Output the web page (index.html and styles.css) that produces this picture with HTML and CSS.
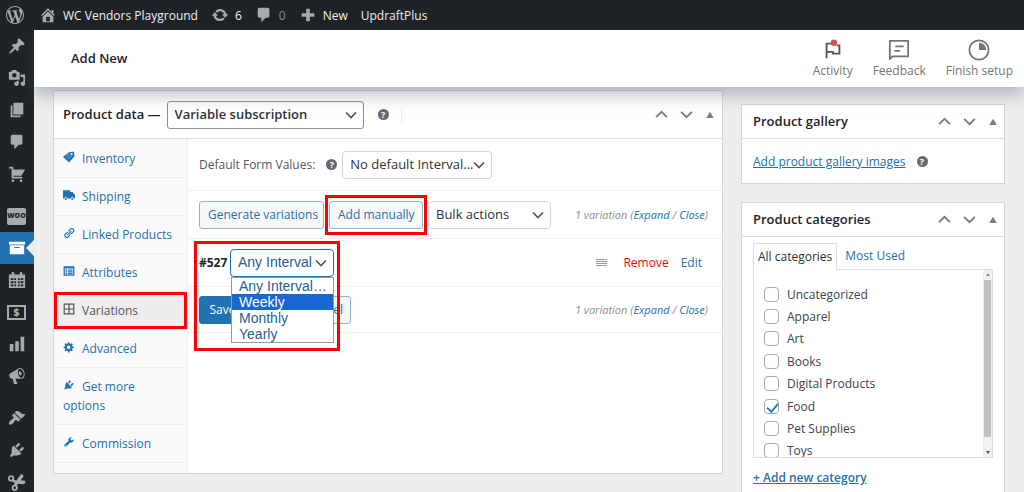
FILE: index.html
```html
<!DOCTYPE html>
<html lang="en">
<head>
<meta charset="utf-8">
<title>Add New</title>
<link rel="stylesheet" href="styles.css">
</head>
<body>
<svg class="sprite" aria-hidden="true">
  <symbol id="wp" viewBox="0 0 20 20"><path d="M20 10c0-5.51-4.49-10-10-10C4.48 0 0 4.49 0 10c0 5.52 4.48 10 10 10 5.51 0 10-4.48 10-10zM7.78 15.37L4.37 6.22c.55-.02 1.17-.08 1.17-.08.5-.06.44-1.13-.06-1.11 0 0-1.45.11-2.37.11-.18 0-.37 0-.58-.01C4.12 2.69 6.87 1.11 10 1.11c2.33 0 4.45.87 6.05 2.34-.68-.11-1.65.39-1.65 1.58 0 .74.45 1.36.9 2.1.35.61.55 1.36.55 2.46 0 1.49-1.4 5-1.4 5l-3.03-8.37c.54-.02.82-.17.82-.17.5-.05.44-1.25-.06-1.22 0 0-1.44.12-2.38.12-.87 0-2.33-.12-2.33-.12-.5-.03-.56 1.2-.06 1.22l.92.08 1.26 3.41zM17.41 10c.24-.64.74-1.87.43-4.25.7 1.29 1.05 2.71 1.05 4.25 0 3.29-1.73 6.24-4.4 7.78.97-2.59 1.94-5.2 2.92-7.78zM6.1 18.09C3.12 16.65 1.11 13.53 1.11 10c0-1.3.23-2.48.72-3.59C3.25 10.3 4.67 14.2 6.1 18.09zm4.03-6.63l2.58 6.98c-.86.29-1.76.45-2.71.45-.79 0-1.57-.11-2.29-.33.81-2.38 1.62-4.74 2.42-7.1z"/></symbol>
  <symbol id="home" viewBox="0 0 20 20"><path d="M16 8.5l1.53 1.53-1.06 1.06L10 4.6l-6.47 6.49-1.06-1.06L10 2.5l4 4v-2h2v4zm-6-2.46l6 5.99V18H4v-5.97zM12 17v-5H8v5h4z"/></symbol>
  <symbol id="update" viewBox="0 0 20 20"><path d="M10.2 3.28c3.53 0 6.43 2.61 6.92 6h2.08l-3.5 4-3.5-4h2.32c-.45-1.97-2.21-3.45-4.32-3.45-1.45 0-2.73.71-3.54 1.78L4.95 5.66C6.23 4.2 8.11 3.28 10.2 3.28zm-.4 13.44c-3.52 0-6.43-2.61-6.92-6H.8l3.5-4c1.17 1.33 2.33 2.67 3.5 4H5.48c.45 1.97 2.21 3.45 4.32 3.45 1.45 0 2.73-.71 3.54-1.78l1.71 1.95c-1.28 1.46-3.15 2.38-5.25 2.38z"/></symbol>
  <symbol id="comment" viewBox="0 0 20 20"><path d="M5 2h9c1.1 0 2 .9 2 2v7c0 1.1-.9 2-2 2h-2l-5 5v-5H5c-1.1 0-2-.9-2-2V4c0-1.1.9-2 2-2z"/></symbol>
  <symbol id="plus" viewBox="0 0 20 20"><path d="M8 3h4v5h5v4h-5v5H8v-5H3V8h5z"/></symbol>
  <symbol id="pin" viewBox="0 0 20 20"><path d="M10.44 3.02l1.82-1.82 6.36 6.35-1.83 1.82c-1.05-.68-2.48-.57-3.41.36l-.75.75c-.92.93-1.04 2.35-.35 3.41l-1.83 1.82-2.41-2.41-2.8 2.79c-.42.42-3.38 2.71-3.8 2.29s1.86-3.39 2.28-3.81l2.79-2.79L4.1 9.36l1.83-1.82c1.05.69 2.48.57 3.4-.36l.75-.75c.93-.92 1.05-2.35.36-3.41z"/></symbol>
  <symbol id="media" viewBox="0 0 20 20"><path d="M13 11V4c0-.55-.45-1-1-1h-1.67L9 1H5L3.67 3H2c-.55 0-1 .45-1 1v7c0 .55.45 1 1 1h10c.55 0 1-.45 1-1zM7 4.5c1.38 0 2.5 1.12 2.5 2.5S8.38 9.5 7 9.5 4.5 8.38 4.5 7 5.62 4.5 7 4.5zM14 6h5v10.5c0 1.38-1.12 2.5-2.5 2.5S14 17.88 14 16.5s1.12-2.5 2.5-2.5c.17 0 .34.02.5.05V9h-3V6zm-4 8.05V13h2v3.5c0 1.38-1.12 2.5-2.5 2.5S7 17.88 7 16.5 8.12 14 9.5 14c.17 0 .34.02.5.05z"/></symbol>
  <symbol id="page" viewBox="0 0 20 20"><path d="M6 15V2h11v13H6zm-1 1h9v2H3V5h2v11z"/></symbol>
  <symbol id="cart" viewBox="0 0 20 20"><path d="M6 13h9c.55 0 1 .45 1 1s-.45 1-1 1H5c-.55 0-1-.45-1-1V4H2c-.55 0-1-.45-1-1s.45-1 1-1h3c.55 0 1 .45 1 1v2h13l-4 7H6v1zm-.5 3c.83 0 1.5.67 1.5 1.5S6.33 19 5.5 19 4 18.33 4 17.5 4.67 16 5.5 16zm9 0c.83 0 1.5.67 1.5 1.5s-.67 1.5-1.5 1.5-1.5-.67-1.5-1.5.67-1.5 1.5-1.5z"/></symbol>
  <symbol id="archive" viewBox="0 0 20 20"><path d="M19 3v3H1V3h18zM2 7h16v10H2V7zm11 3V9H7v1h6z"/></symbol>
  <symbol id="calendar" viewBox="0 0 20 20"><path fill-rule="evenodd" d="M1 4h3V2.500a1.500 1.500 0 0 1 3 0V4h6V2.500a1.500 1.500 0 0 1 3 0V4h3v15H1zM3 8v2h3V8zm4 0v2h2V8zM11 8v2h2V8zm3 0v2h3V8zM3 11.500v2h3v-2zm4 0v2h2v-2zM11 11.500v2h2v-2zm3 0v2h3v-2zM3 15v2h3v-2zm4 0v2h2v-2zM11 15v2h2v-2zm3 0v2h3v-2z"/></symbol>
  <symbol id="chart" viewBox="0 0 20 20"><path d="M18 18V2h-4v16h4zm-6 0V7H8v11h4zm-6 0v-8H2v8h4z"/></symbol>
  <symbol id="megaphone" viewBox="0 0 20 20"><path d="M18.150 5.940c.46 1.620.38 3.220-.02 4.480-.42 1.280-1.260 2.180-2.300 2.480-.16.06-.26.06-.4.06-.06.02-.12.02-.18.02-.06.02-.14.02-.22.02h-6.800l2.220 5.500c.02.14-.06.26-.14.34-.08.1-.24.16-.34.16H6.950c-.1 0-.26-.06-.34-.16-.08-.08-.16-.2-.14-.34l-1-5.500H4.250l-.02-.02c-.5.06-1.080-.18-1.540-.62s-.88-1.080-1.060-1.880c-.24-.8-.2-1.560-.02-2.200.18-.62.58-1.080 1.060-1.300l.02-.02 9-5.400c.1-.06.18-.1.24-.16.06-.04.14-.08.24-.12.16-.08.28-.12.5-.18 1.040-.3 2.240.1 3.220.98s1.840 2.240 2.260 3.860zm-2.580 5.980h-.02c.4-.1.74-.34 1.040-.7.58-.7.86-1.760.86-3.040 0-.64-.1-1.300-.28-1.980-.34-1.360-1.020-2.500-1.780-3.240s-1.680-1.100-2.460-.88c-.82.22-1.400.96-1.700 2-.32 1.040-.28 2.360.06 3.720.38 1.360 1 2.500 1.800 3.240.78.74 1.620 1.100 2.480.88zm-2.540-7.080c.22-.04.42-.02.62.04.38.16.76.48 1.020 1s.42 1.200.42 1.780c0 .3-.04.56-.12.8-.18.48-.44.84-.86.94-.34.1-.8-.06-1.140-.4s-.64-.86-.78-1.500c-.18-.62-.12-1.240.02-1.720s.48-.84.82-.94z"/></symbol>
  <symbol id="brush" viewBox="0 0 20 20"><path d="M14.480 11.060L7.410 3.990l1.500-1.500c.5-.56 2.300-.47 3.510.32 1.210.8 1.430 1.280 2.910 2.100 1.180.64 2.450 1.260 4.450.85zm-.71.71L6.700 4.700 4.930 6.470c-.39.39-.39 1.020 0 1.410l1.060 1.060c.39.39.39 1.030 0 1.420-.6.6-1.430 1.110-2.210 1.690-.35.26-.7.53-1.010.84C1.430 14.230.4 16.080 1.400 17.070c.99 1 2.840-.03 4.180-1.360.31-.31.58-.66.85-1.020.57-.78 1.080-1.610 1.690-2.210.39-.39 1.020-.39 1.410 0l1.060 1.060c.39.39 1.020.39 1.410 0z"/></symbol>
  <symbol id="plug" viewBox="0 0 20 20"><path d="M13.110 4.360L9.870 7.600 8 5.730l3.240-3.240c.35-.34 1.050-.2 1.560.32.52.51.66 1.210.31 1.550zm-8 1.770l.91-1.120 9.010 9.010-1.190.84c-.71.71-2.630 1.160-3.820 1.160H6.140L4.900 17.260c-.59.59-1.540.59-2.120 0-.59-.58-.59-1.530 0-2.120l1.240-1.240v-3.880c0-1.130.4-3.190 1.090-3.890zm7.260 3.970l3.240-3.240c.34-.35 1.040-.21 1.550.31.52.51.66 1.210.31 1.550l-3.240 3.250z"/></symbol>
  <symbol id="scissors" viewBox="0 0 20 20"><path d="M5 6.500l4 2L14.500 1.500c2 0 3 1.500 2.500 3L14 8l5 .5c1 1.500 0 3.500-2 4l-6-.5-2 3-2.500-1.500 1-2.500L4 9z"/><circle cx="3.500" cy="6" r="2.500" fill="none" stroke="currentColor" stroke-width="2"/><circle cx="7.500" cy="16.500" r="2.500" fill="none" stroke="currentColor" stroke-width="2"/></symbol>
  <symbol id="tag" viewBox="0 0 20 20"><path fill-rule="evenodd" d="M10 2l7-1 1.500 1.500L19 9l-9 10L0 9.500zM14.500 3.500a1.500 1.500 0 1 0 .1 0z"/><path d="M4.500 9.500L11 3.500M6.500 11.500L13 6M8.500 13.500L15.500 7.500" fill="none" stroke="#fff" stroke-opacity=".55" stroke-width="1"/></symbol>
  <symbol id="truck" viewBox="0 0 20 20"><path d="M0 2h12v3h4l4 5v6h-2a2.500 2.500 0 0 0-5 0H7a2.500 2.500 0 0 0-5 0H0z"/><circle cx="4.500" cy="16.500" r="1.700"/><circle cx="15.500" cy="16.500" r="1.700"/></symbol>
  <symbol id="link" viewBox="0 0 20 20"><path d="M17.740 2.760c1.680 1.690 1.680 4.410 0 6.100l-1.530 1.520c-1.120 1.120-2.700 1.470-4.140 1.090l2.620-2.610.76-.77.76-.76c.84-.84.84-2.200 0-3.040-.84-.85-2.200-.85-3.040 0l-.77.76-3.380 3.380c-.37-1.440-.02-3.020 1.100-4.140l1.520-1.530c1.690-1.680 4.420-1.680 6.100 0zM8.590 13.430l5.340-5.340c.42-.42.42-1.100 0-1.520-.44-.43-1.130-.39-1.530 0l-5.330 5.340c-.42.42-.42 1.100 0 1.520.44.43 1.130.39 1.520 0zm-.76 2.290l4.140-4.150c.38 1.440.03 3.020-1.090 4.140l-1.520 1.530c-1.690 1.680-4.410 1.680-6.100 0-1.680-1.680-1.680-4.420 0-6.100l1.530-1.520c1.120-1.120 2.700-1.470 4.140-1.100l-4.140 4.150c-.85.84-.85 2.200 0 3.050.84.84 2.200.84 3.040 0z"/></symbol>
  <symbol id="list" viewBox="0 0 20 20"><path fill-rule="evenodd" d="M1 2h18v16H1zM3 6v10h14V6z"/><path d="M4 7.500h3v2H4zm4.500 0H16v2H8.500zM4 10.500h3v2H4zm4.500 0H16v2H8.500zM4 13.500h3v2H4zm4.500 0H16v2H8.500z"/></symbol>
  <symbol id="grid" viewBox="0 0 20 20"><path fill-rule="evenodd" d="M1 1h18v18H1zM3 3v6h6V3zm8 0v6h6V3zM3 11v6h6v-6zm8 0v6h6v-6z"/></symbol>
  <symbol id="gear" viewBox="0 0 20 20"><path d="M18 12h-2.180c-.17.7-.44 1.350-.81 1.930l1.540 1.540-2.100 2.100-1.540-1.540c-.58.36-1.230.63-1.910.79V19H8v-2.180c-.68-.16-1.330-.43-1.910-.79l-1.540 1.540-2.120-2.120 1.540-1.540c-.36-.58-.63-1.230-.79-1.910H1V9.030h2.170c.16-.7.44-1.350.8-1.940L2.430 5.550l2.100-2.100 1.540 1.540c.58-.37 1.240-.64 1.930-.81V2h3v2.180c.68.16 1.330.43 1.910.79l1.540-1.540 2.120 2.120-1.540 1.540c.36.59.64 1.240.8 1.940H18V12zm-8.500 1.500c1.660 0 3-1.340 3-3s-1.340-3-3-3-3 1.340-3 3 1.340 3 3 3z"/></symbol>
  <symbol id="wrench" viewBox="0 0 20 20"><path d="M16.680 9.770c-1.340 1.340-3.300 1.670-4.950.99l-5.410 6.520c-.99.99-2.590.99-3.580 0s-.99-2.590 0-3.570l6.520-5.420c-.68-1.650-.35-3.610.99-4.950 1.280-1.280 3.120-1.620 4.720-1.060l-2.890 2.890 2.820 2.820 2.860-2.870c.53 1.580.18 3.390-1.080 4.650zM3.810 16.210c.4.39 1.040.39 1.430 0 .4-.4.4-1.040 0-1.430-.39-.4-1.030-.4-1.430 0-.39.39-.39 1.030 0 1.430z"/></symbol>
  <symbol id="down" viewBox="0 0 12 12"><path d="M1 3.500l5 5 5-5" fill="none" stroke="currentColor" stroke-width="1.700"/></symbol>
  <symbol id="up" viewBox="0 0 12 12"><path d="M1 8.500l5-5 5 5" fill="none" stroke="currentColor" stroke-width="1.700"/></symbol>
  <symbol id="toggle" viewBox="0 0 12 12"><path d="M6 2l4.500 7.500h-9z"/></symbol>
</svg>

<nav class="adminbar" aria-label="Toolbar">
  <a class="adminbar-item adminbar-logo" href="#" aria-label="WordPress"><svg><use href="#wp"/></svg></a>
  <a class="adminbar-item" href="#"><svg><use href="#home"/></svg>WC Vendors Playground</a>
  <a class="adminbar-item" href="#"><svg><use href="#update"/></svg>6</a>
  <a class="adminbar-item comments" href="#"><svg><use href="#comment"/></svg>0</a>
  <a class="adminbar-item" href="#"><svg><use href="#plus"/></svg>New</a>
  <a class="adminbar-item" href="#">UpdraftPlus</a>
</nav>

<div class="shell">
  <nav class="menu" aria-label="Main menu">
    <a href="#" aria-label="Posts"><svg><use href="#pin"/></svg></a>
    <a href="#" aria-label="Media"><svg><use href="#media"/></svg></a>
    <a href="#" aria-label="Pages"><svg><use href="#page"/></svg></a>
    <a href="#" aria-label="Comments"><svg><use href="#comment"/></svg></a>
    <a href="#" aria-label="Orders"><svg><use href="#cart"/></svg></a>
    <a class="group" href="#"><span class="woo">WOO</span></a>
    <a class="current" href="#" aria-label="Products"><svg><use href="#archive"/></svg></a>
    <a href="#" aria-label="Bookings"><svg><use href="#calendar"/></svg></a>
    <a href="#"><span class="money">$</span></a>
    <a href="#" aria-label="Analytics"><svg><use href="#chart"/></svg></a>
    <a href="#" aria-label="Marketing"><svg><use href="#megaphone"/></svg></a>
    <a class="group" href="#" aria-label="Appearance"><svg><use href="#brush"/></svg></a>
    <a href="#" aria-label="Plugins"><svg><use href="#plug"/></svg></a>
    <a href="#" aria-label="Snippets"><svg><use href="#scissors"/></svg></a>
  </nav>

  <div class="page">
    <header class="header">
      <h1>Add New</h1>
      <div class="header-actions">
        <button type="button"><svg viewBox="0 0 24 24"><path d="M5 21V5h7M5 14h7v2h7V7h-3" fill="none" stroke="#50575e" stroke-width="2"/><circle cx="13" cy="4" r="3.500" fill="#d94f4f"/></svg>Activity</button>
        <button type="button"><svg viewBox="0 0 24 24"><path d="M2 22V2h20v17H5z" fill="none" stroke="currentColor" stroke-width="2" stroke-linejoin="round"/><path d="M8 8h9M7 13h6" fill="none" stroke="currentColor" stroke-width="2"/></svg>Feedback</button>
        <button type="button"><svg viewBox="0 0 24 24"><circle cx="12" cy="12" r="10.500" fill="none" stroke="currentColor" stroke-width="2"/><path d="M12 4a8 8 0 0 1 8 8h-8z"/></svg>Finish setup</button>
      </div>
    </header>

    <main class="content">
      <section class="box product">
        <div class="product-head">
          <label for="ptype">Product data —</label>
          <span class="select type"><select id="ptype"><option>Variable subscription</option></select><svg><use href="#down"/></svg></span>
          <span class="help">?</span>
          <span class="divider"></span>
          <div class="handles">
            <button type="button" aria-label="Move up"><svg><use href="#up"/></svg></button>
            <button type="button" aria-label="Move down"><svg><use href="#down"/></svg></button>
            <button type="button" aria-label="Toggle panel"><svg class="tri"><use href="#toggle"/></svg></button>
          </div>
        </div>
        <div class="product-body">
          <nav class="tabs" aria-label="Product data">
            <a href="#"><svg><use href="#tag"/></svg>Inventory</a>
            <a href="#"><svg><use href="#truck"/></svg>Shipping</a>
            <a href="#"><svg><use href="#link"/></svg>Linked Products</a>
            <a href="#"><svg><use href="#list"/></svg>Attributes</a>
            <a class="active" href="#"><svg><use href="#grid"/></svg>Variations</a>
            <a href="#"><svg><use href="#gear"/></svg>Advanced</a>
            <a href="#"><svg><use href="#plug"/></svg>Get more options</a>
            <a href="#"><svg><use href="#wrench"/></svg>Commission</a>
          </nav>
          <div class="panel">
            <div class="row defaults">
              <label for="interval">Default Form Values:</label>
              <span class="help">?</span>
              <span class="select default"><select id="interval"><option>No default Interval...</option></select><svg><use href="#down"/></svg></span>
            </div>
            <div class="row actions">
              <button class="btn generate" type="button">Generate variations</button>
              <span class="marked"><button class="btn" type="button">Add manually</button></span>
              <span class="select bulk"><select aria-label="Bulk actions"><option>Bulk actions</option></select><svg><use href="#down"/></svg></span>
              <span class="count">1 variation (<a href="#">Expand</a> / <a href="#">Close</a>)</span>
            </div>
            <div class="row variation">
              <strong>#527</strong>
              <div class="picker">
                <span class="select open"><select aria-label="Interval"><option>Any Interval</option></select><svg><use href="#down"/></svg></span>
                <ul class="options" role="listbox" aria-label="Interval options">
                  <li role="option">Any Interval…</li>
                  <li role="option" aria-selected="true">Weekly</li>
                  <li role="option">Monthly</li>
                  <li role="option">Yearly</li>
                </ul>
              </div>
              <div class="variation-links"><span class="grip"></span><a class="remove" href="#">Remove</a><a href="#">Edit</a></div>
              <span class="callout"></span>
            </div>
            <div class="row saving">
              <button class="btn primary" type="button">Save changes</button>
              <button class="btn cancel" type="button">Cancel</button>
              <span class="count">1 variation (<a href="#">Expand</a> / <a href="#">Close</a>)</span>
            </div>
          </div>
        </div>
      </section>

      <aside class="side">
        <section class="box">
          <div class="box-head"><h2>Product gallery</h2>
            <div class="handles">
              <button type="button" aria-label="Move up"><svg><use href="#up"/></svg></button>
              <button type="button" aria-label="Move down"><svg><use href="#down"/></svg></button>
              <button type="button" aria-label="Toggle panel"><svg class="tri"><use href="#toggle"/></svg></button>
            </div>
          </div>
          <div class="gallery"><a href="#">Add product gallery images</a><span class="help">?</span></div>
        </section>
        <section class="box">
          <div class="box-head"><h2>Product categories</h2>
            <div class="handles">
              <button type="button" aria-label="Move up"><svg><use href="#up"/></svg></button>
              <button type="button" aria-label="Move down"><svg><use href="#down"/></svg></button>
              <button type="button" aria-label="Toggle panel"><svg class="tri"><use href="#toggle"/></svg></button>
            </div>
          </div>
          <div class="cat-body">
            <div class="cat-tabs"><a class="on" href="#">All categories</a><a href="#">Most Used</a></div>
            <div class="cat-panel">
              <div class="cat-list">
                <label><input type="checkbox">Uncategorized</label>
                <label><input type="checkbox">Apparel</label>
                <label><input type="checkbox">Art</label>
                <label><input type="checkbox">Books</label>
                <label><input type="checkbox">Digital Products</label>
                <label><input type="checkbox" checked>Food</label>
                <label><input type="checkbox">Pet Supplies</label>
                <label><input type="checkbox">Toys</label>
              </div>
              <div class="scroll"><i class="arrow-up"></i><span class="thumb"></span><i class="arrow-down"></i></div>
            </div>
            <a class="add-cat" href="#">+ Add new category</a>
          </div>
        </section>
      </aside>
    </main>
  </div>
</div>
</body>
</html>
```

FILE: styles.css
```css
* { box-sizing: border-box; }
body {
  margin: 0;
  height: 100vh;
  display: flex;
  flex-direction: column;
  overflow: hidden;
  background: #eee;
  color: #3c434a;
  font: 12px/19px "Open Sans", "Noto Sans", sans-serif;
}
a { color: #2271b1; text-decoration: none; }
svg { fill: currentColor; flex: none; }
button, select, input { font: inherit; color: inherit; }
h1, h2, ul { margin: 0; padding: 0; }
.sprite { position: absolute; width: 0; height: 0; }

/* toolbar */
.adminbar {
  flex: none;
  height: 30px;
  display: flex;
  align-items: center;
  gap: 13px;
  background: #1d2327;
}
.adminbar-item { display: flex; align-items: center; gap: 6px; color: #f0f0f1; }
.adminbar-item svg { width: 18px; height: 18px; color: #a7aaad; }
.adminbar-logo { padding: 0 2px 0 6px; }
.adminbar .comments { color: #8c8f94; }

/* left menu */
.shell { flex: 1; min-height: 0; display: flex; }
.menu {
  flex: none;
  width: 34px;
  display: flex;
  flex-direction: column;
  background: #1d2327;
  overflow: hidden;
}
.menu a {
  flex: none;
  height: 32px;
  display: flex;
  align-items: center;
  justify-content: center;
  padding-right: 1px;
  color: #a7aaad;
}
.menu svg { width: 18px; height: 18px; }
.menu .group { margin-top: 10px; }
.menu .current { position: relative; background: #2271b1; color: #fff; }
.menu .current::after {
  content: "";
  position: absolute;
  right: 0;
  top: 8px;
  border: 8px solid transparent;
  border-left-width: 0;
  border-right-color: #eee;
}
.woo, .money { width: 19px; text-align: center; font-weight: 800; }
.woo { height: 17px; border-radius: 2px; background: #a7aaad; color: #1d2327; font-size: 7px; line-height: 16px; }
.money { height: 15px; border: 2px solid #a7aaad; font-size: 10px; line-height: 11px; }

/* page header */
.page { flex: 1; min-width: 0; display: flex; flex-direction: column; }
.header {
  flex: none;
  position: relative;
  z-index: 5;
  height: 57px;
  display: flex;
  align-items: center;
  justify-content: space-between;
  padding: 0 11px 0 37px;
  background: #fff;
  box-shadow: 0 8px 16px rgba(85, 93, 102, .4);
}
h1 { font-size: 13px; font-weight: 600; color: #1d2327; }
.header-actions { display: flex; gap: 20px; }
.header-actions button {
  display: flex;
  flex-direction: column;
  align-items: center;
  padding: 0;
  border: 0;
  background: none;
  color: #757575;
}
.header-actions svg { width: 24px; height: 22px; margin-top: 2px; }

.content { flex: 1; min-height: 0; display: flex; align-items: flex-start; gap: 18px; padding: 3px 19px 0; }
.box { background: #fff; border: 1px solid #d5d6d8; }
.help {
  flex: none;
  width: 11px;
  height: 11px;
  border-radius: 50%;
  background: #646970;
  color: #fff;
  font-size: 9px;
  line-height: 11px;
  font-weight: 700;
  text-align: center;
}
.handles { margin-left: auto; display: flex; align-items: center; gap: 12px; color: #787c82; }
.handles button { display: flex; padding: 0; border: 0; background: none; }
.handles svg { width: 13px; height: 13px; }
.handles .tri { width: 10px; height: 10px; }

/* drop-downs and buttons */
.select { position: relative; flex: none; display: block; height: 28px; }
.select select {
  appearance: none;
  width: 100%;
  height: 100%;
  padding: 0 18px 0 7px;
  border: 1px solid #d5d7da;
  border-radius: 4px;
  background: #fff;
  color: #2c3338;
  font-size: 13px;
}
.select svg { position: absolute; right: 7px; top: 8px; width: 12px; height: 12px; color: #50575e; pointer-events: none; }
.btn {
  flex: none;
  height: 28px;
  padding: 0 8px;
  border: 1px solid #8ab4d8;
  border-radius: 3px;
  background: #f6f7f7;
  color: #2271b1;
  white-space: nowrap;
}
.btn.primary { background: #2271b1; border-color: #2271b1; color: #fff; }

/* product data */
.product { flex: 1; min-width: 0; }
.product-head { height: 48px; display: flex; align-items: center; padding: 0 7px 0 9px; border-bottom: 1px solid #dcdcde; font-size: 13px; font-weight: 600; color: #1d2327; }
.type { width: 197px; margin-left: 6px; }
.type select { border-color: #8c8f94; border-radius: 3px; }
.product-head .help { margin-left: 14px; }
.divider { width: 1px; height: 16px; margin-left: 12px; background: #eee; }
.product-body { display: flex; }
.tabs { flex: none; width: 134px; padding: 1px 0 10px; background: #fafafa; border-right: 1px solid #eee; }
.tabs a { display: block; padding: 9px; border-bottom: 1px solid #eee; }
.tabs svg { width: 12px; height: 12px; margin-right: 7px; }
.tabs .active { background: #eee; color: #555; box-shadow: 0 0 0 3px #f00 inset; }
.panel { flex: 1; min-width: 0; }
.row { display: flex; align-items: center; padding: 0 14px 0 11px; border-bottom: 1px solid #eee; }
.defaults { height: 52px; }
.defaults label { font-weight: 500; color: #50575e; }
.defaults .help { margin: 0 5px 0 11px; }
.default { width: 150px; }
.actions { height: 48px; }
.generate { width: 125px; }
.marked { margin-left: 1px; padding: 3px 1px; border: 3px solid #f00; }
.marked .btn { display: block; width: 94px; }
.bulk { width: 123px; margin-left: 1px; }
.count { margin-left: auto; font-size: 11px; font-style: italic; color: #8c8f94; white-space: nowrap; }
.variation { position: relative; height: 48px; }
.variation strong { color: #1d2327; width: 31px; }
.picker { position: relative; z-index: 2; width: 104px; }
.open select { border-color: #2271b1; color: #1f5f96; font-family: "Liberation Sans", sans-serif; font-size: 14px; }
.options {
  position: absolute;
  top: 28px;
  left: 1px;
  right: 0;
  border: 1px solid #999;
  background: #fff;
  color: #1f5f96;
  font: 14px/16px "Liberation Sans", sans-serif;
  list-style: none;
}
.options li { padding-left: 7px; }
.options [aria-selected] { background: #1967d2; color: #fff; }
.callout { position: absolute; z-index: 3; top: 2px; left: 6px; width: 146px; height: 110px; border: 3px solid #f00; pointer-events: none; }
.variation-links { margin-left: auto; display: flex; align-items: center; gap: 12px; padding-right: 6px; }
.remove { color: #f00; }
.grip { width: 11px; height: 8px; margin-right: 4px; background: repeating-linear-gradient(#999 0 1px, #fff 1px 2px); }
.saving { height: 46px; }
.primary { width: 96px; }
.cancel { width: 54px; margin-left: 2px; }

/* side boxes */
.side { flex: none; width: 264px; padding-top: 14px; display: flex; flex-direction: column; gap: 18px; }
.box-head { height: 34px; display: flex; align-items: center; padding: 0 6px 0 11px; border-bottom: 1px solid #dcdcde; }
h2 { font-size: 13px; font-weight: 600; color: #1d2327; }
.gallery { height: 44px; display: flex; align-items: center; gap: 11px; padding: 0 11px; }
.gallery a { text-decoration: underline; }
.cat-body { padding: 6px 11px 12px; }
.cat-tabs { display: flex; height: 26px; }
.cat-tabs a { padding: 3px 8px; line-height: 20px; }
.cat-tabs .on { position: relative; z-index: 1; height: 27px; padding: 3px 4px; border: 1px solid #dcdcde; border-bottom: 0; background: #fff; color: #2c3338; }
.cat-panel { height: 189px; display: flex; border: 1px solid #dcdcde; overflow: hidden; }
.cat-list { flex: 1; height: 179px; margin-top: 13px; padding-left: 10px; display: grid; grid-auto-rows: 1fr; }
.cat-list label { display: flex; align-items: center; gap: 8px; }
.cat-list input {
  appearance: none;
  position: relative;
  width: 15px;
  height: 15px;
  margin: 0;
  border: 1px solid #a5a8ac;
  border-radius: 4px;
  background: #fff;
}
.cat-list input:checked::after {
  content: "";
  position: absolute;
  left: 4px;
  top: 1px;
  width: 5px;
  height: 9px;
  border: solid #2a7fc4;
  border-width: 0 2px 2px 0;
  transform: rotate(40deg);
}
.scroll { width: 9px; display: flex; flex-direction: column; align-items: center; justify-content: space-between; padding: 3px 0; background: #f1f1f1; }
.scroll i { border: 2px solid transparent; }
.scroll .arrow-up { border-top-width: 0; border-bottom: 3px solid #8a8a8a; }
.scroll .arrow-down { border-bottom-width: 0; border-top: 3px solid #505050; }
.thumb { width: 7px; height: 157px; margin-bottom: 10px; background: #c1c1c1; }
.add-cat { display: inline-block; margin-top: 10px; font-weight: 600; text-decoration: underline; }
```
